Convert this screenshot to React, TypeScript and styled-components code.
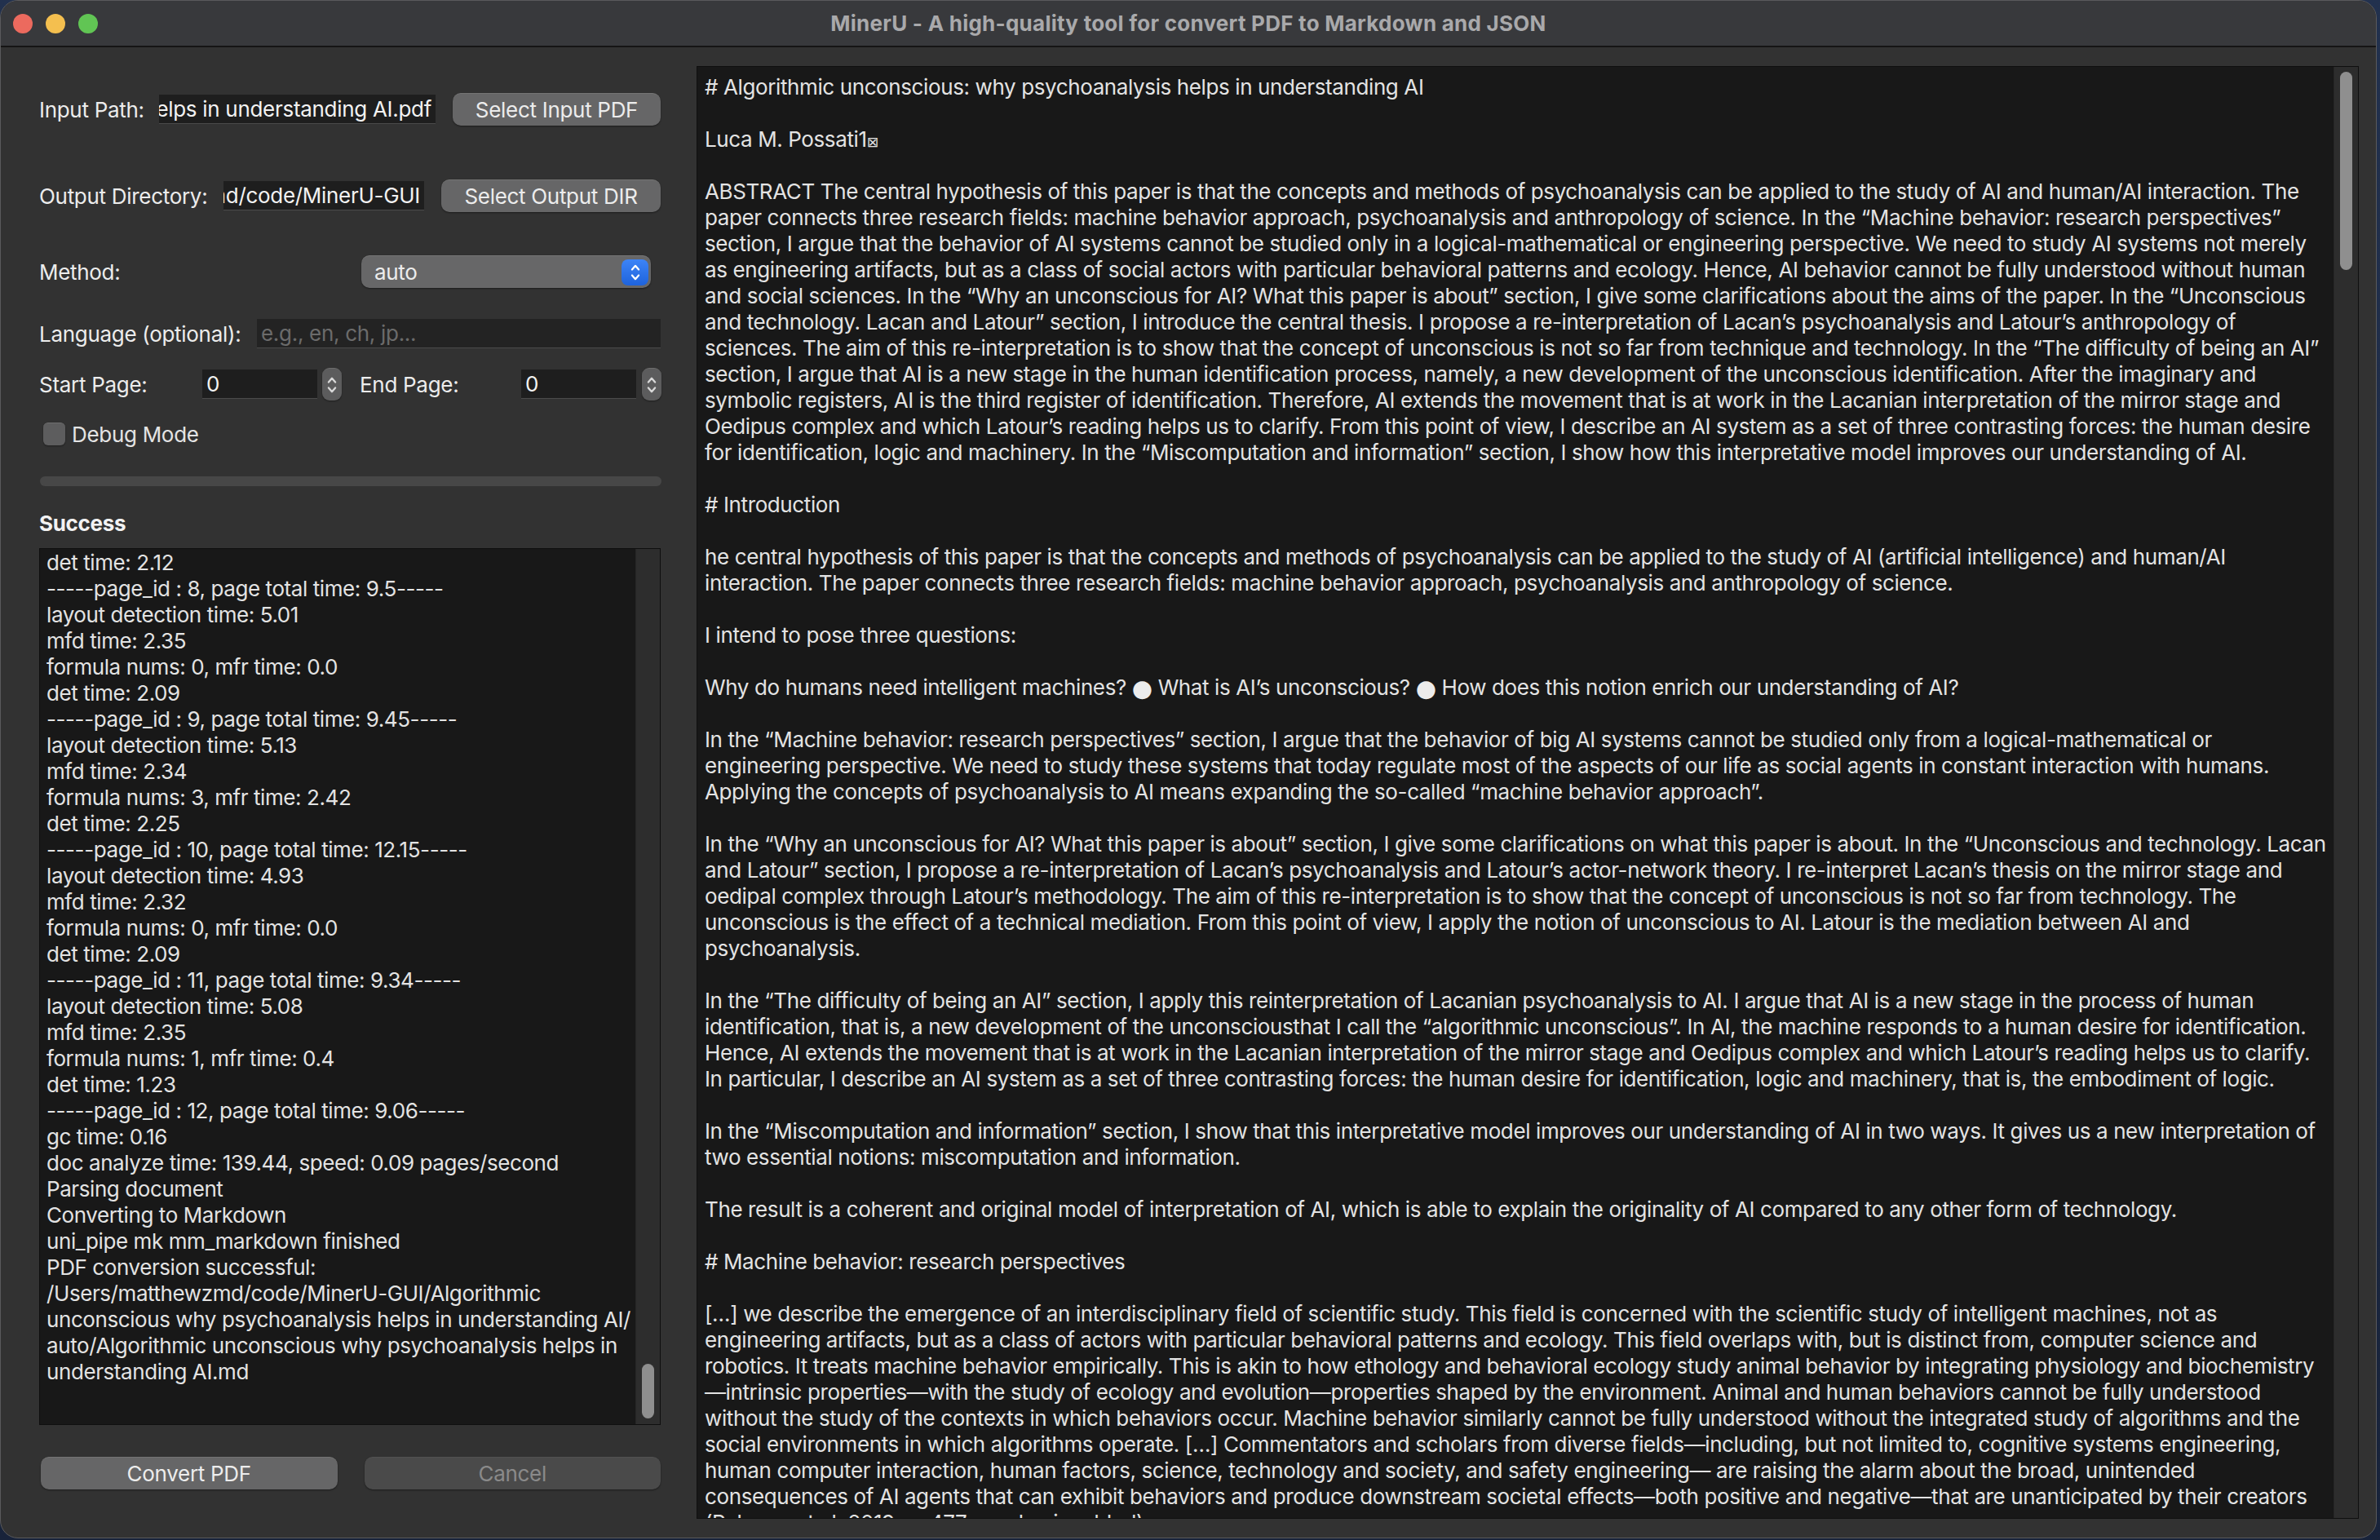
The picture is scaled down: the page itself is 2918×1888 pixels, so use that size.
import React from 'react';
import styled, { createGlobalStyle } from 'styled-components';

const GlobalStyle = createGlobalStyle`
  html, body { margin: 0; padding: 0; background: #1c2940; }
  body { overflow: hidden; font-family: Inter, "Noto Sans", "Liberation Sans", sans-serif; }
  #root { width: 2918px; height: 1888px; }
`;

const Desktop = styled.div`
  width: 2918px;
  height: 1888px;
  background: linear-gradient(180deg, #22314e 0%, #18233a 100%);
`;

const Window = styled.div`
  width: 2914px;
  height: 1886px;
  box-sizing: border-box;
  border: 1px solid #5a5a5c;
  border-radius: 22px;
  overflow: hidden;
  background: #323232;
  display: flex;
  flex-direction: column;
  color: #e6e6e6;
  font-size: 26px;
  letter-spacing: -0.3px;
`;

const TitleBar = styled.div`
  height: 55px;
  flex: none;
  background: #38393c;
  border-bottom: 2px solid #151515;
  display: grid;
  grid-template-columns: 1fr auto 1fr;
  align-items: center;
`;

const Lights = styled.div`
  display: flex;
  gap: 16px;
  padding-left: 15px;
`;

const Light = styled.span<{ $c: string }>`
  width: 24px;
  height: 24px;
  border-radius: 50%;
  background: ${(p) => p.$c};
`;

const Title = styled.div`
  font-weight: 700;
  color: #a9a9ab;
  font-size: 26px;
  letter-spacing: 0.25px;
`;

const Body = styled.div`
  flex: 1;
  display: flex;
  gap: 44px;
  padding: 0 21px 23px 47px;
  min-height: 0;
`;

const Left = styled.div`
  width: 762px;
  flex: none;
  display: flex;
  flex-direction: column;
`;

const Row = styled.div<{ $mt: number; $h: number }>`
  margin-top: ${(p) => p.$mt}px;
  height: ${(p) => p.$h}px;
  display: flex;
  align-items: center;
  flex: none;
`;

const Label = styled.div<{ $w?: number; $ml?: number }>`
  ${(p) => (p.$w ? `width: ${p.$w}px; flex: none;` : 'flex: 1;')}
  margin-left: ${(p) => p.$ml ?? 0}px;
  color: #ececec;
  white-space: nowrap;
`;

const Field = styled.div<{ $w?: number; $placeholder?: boolean }>`
  ${(p) => (p.$w ? `width: ${p.$w}px; flex: none;` : 'flex: 1;')}
  height: 36px;
  box-sizing: border-box;
  background: ${(p) => (p.$placeholder ? '#232323' : '#1e1e1e')};
  border-bottom: 1px solid #4b4b4b;
  display: flex;
  align-items: center;
  overflow: hidden;
  white-space: nowrap;
  padding: 0 5px;
  color: ${(p) => (p.$placeholder ? '#6b6b6b' : '#f2f2f2')};
`;

const PathField = styled(Field)`
  justify-content: flex-end;
`;

const Button = styled.div<{ $w?: number; $disabled?: boolean; $ml?: number }>`
  ${(p) => (p.$w ? `width: ${p.$w}px; flex: none;` : 'flex: 1;')}
  margin-left: ${(p) => p.$ml ?? 0}px;
  height: 40px;
  box-sizing: border-box;
  border-radius: 10px;
  background: ${(p) => (p.$disabled ? '#4a4a4a' : '#666667')};
  border-top: 1px solid ${(p) => (p.$disabled ? '#525252' : '#747474')};
  box-shadow: 0 1px 2px rgba(0, 0, 0, 0.45);
  color: ${(p) => (p.$disabled ? '#8a8a8a' : '#ececec')};
  display: flex;
  align-items: center;
  justify-content: center;
  white-space: nowrap;
`;

const Select = styled.div`
  width: 355px;
  height: 40px;
  margin-right: 12px;
  box-sizing: border-box;
  border-radius: 10px;
  background: #676768;
  border-top: 1px solid #767676;
  box-shadow: 0 1px 2px rgba(0, 0, 0, 0.45);
  display: flex;
  align-items: center;
  padding: 0 3px 0 16px;
  color: #ececec;
`;

const SelectText = styled.span`
  flex: 1;
`;

const BlueArrows = styled.div`
  width: 33px;
  height: 32px;
  border-radius: 8px;
  background: linear-gradient(180deg, #3d84f7 0%, #1e63dc 100%);
  display: flex;
  align-items: center;
  justify-content: center;
`;

const Stepper = styled.div<{ $ml: number }>`
  width: 24px;
  height: 40px;
  margin-left: ${(p) => p.$ml}px;
  flex: none;
  box-sizing: border-box;
  border-radius: 9px;
  background: #5c5c5d;
  border-top: 1px solid #6c6c6c;
  box-shadow: 0 1px 2px rgba(0, 0, 0, 0.4);
  display: flex;
  align-items: center;
  justify-content: center;
`;

const Checkbox = styled.div`
  width: 27px;
  height: 28px;
  margin-left: 5px;
  border-radius: 6px;
  background: #5d5d5e;
  border-top: 1px solid #6e6e6e;
  box-sizing: border-box;
  box-shadow: 0 1px 2px rgba(0, 0, 0, 0.4);
`;

const CheckLabel = styled.span`
  margin-left: 8px;
  color: #e4e4e4;
`;

const Progress = styled.div`
  margin-top: 38px;
  height: 12px;
  flex: none;
  border-radius: 6px;
  background: #474747;
  margin-left: 1px;
  margin-right: -1px;
`;

const Heading = styled.div`
  margin-top: 32px;
  height: 28px;
  line-height: 28px;
  font-weight: 700;
  color: #f2f2f2;
`;

const Scroller = styled.div<{ $mt?: number; $h?: number }>`
  ${(p) => (p.$mt !== undefined ? `margin-top: ${p.$mt}px;` : '')}
  ${(p) => (p.$h !== undefined ? `height: ${p.$h}px; flex: none;` : 'flex: 1;')}
  box-sizing: border-box;
  background: #181818;
  border: 1px solid #0f0f0f;
  display: flex;
  overflow: hidden;
`;

const TextArea = styled.div<{ $pt: number; $pl: number; $ls: number }>`
  flex: 1;
  overflow: hidden;
  padding: ${(p) => p.$pt}px 0 0 ${(p) => p.$pl}px;
  line-height: 32px;
  letter-spacing: ${(p) => p.$ls}px;
  color: #e3e3e3;
`;

const Line = styled.div`
  white-space: nowrap;
  height: 32px;
`;

const Track = styled.div<{ $end?: boolean }>`
  width: 30px;
  flex: none;
  background: #2d2d2d;
  border-left: 1px solid #262626;
  display: flex;
  flex-direction: column;
  align-items: center;
  justify-content: ${(p) => (p.$end ? 'flex-end' : 'flex-start')};
  padding: 6px 0 7px;
  box-sizing: border-box;
`;

const Thumb = styled.div<{ $h: number }>`
  width: 15px;
  height: ${(p) => p.$h}px;
  border-radius: 8px;
  background: #8f8f8f;
`;

const Mail = styled.span`
  font-size: 17px;
  font-family: "DejaVu Sans", sans-serif;
`;

const Bullet = styled.span`
  font-family: "DejaVu Sans", sans-serif;
  font-size: 29px;
  line-height: 0;
  vertical-align: -2px;
  color: #ececec;
`;

const ButtonRow = styled.div`
  margin-top: 39px;
  height: 40px;
  flex: none;
  display: flex;
  gap: 33px;
  padding-left: 2px;
`;

const Right = styled.div`
  flex: 1;
  display: flex;
  flex-direction: column;
  padding-top: 23px;
  min-width: 0;
`;

const Chevrons = ({ color, w, h, sw }: { color: string; w: number; h: number; sw: number }) => (
  <svg width={w} height={h} viewBox="0 0 12 20" fill="none" stroke={color} strokeWidth={sw} strokeLinecap="round" strokeLinejoin="round">
    <path d="M2.5 7 L6 3 L9.5 7" />
    <path d="M2.5 13 L6 17 L9.5 13" />
  </svg>
);

const logLines = [
  'det time: 2.12',
  '-----page_id : 8, page total time: 9.5-----',
  'layout detection time: 5.01',
  'mfd time: 2.35',
  'formula nums: 0, mfr time: 0.0',
  'det time: 2.09',
  '-----page_id : 9, page total time: 9.45-----',
  'layout detection time: 5.13',
  'mfd time: 2.34',
  'formula nums: 3, mfr time: 2.42',
  'det time: 2.25',
  '-----page_id : 10, page total time: 12.15-----',
  'layout detection time: 4.93',
  'mfd time: 2.32',
  'formula nums: 0, mfr time: 0.0',
  'det time: 2.09',
  '-----page_id : 11, page total time: 9.34-----',
  'layout detection time: 5.08',
  'mfd time: 2.35',
  'formula nums: 1, mfr time: 0.4',
  'det time: 1.23',
  '-----page_id : 12, page total time: 9.06-----',
  'gc time: 0.16',
  'doc analyze time: 139.44, speed: 0.09 pages/second',
  'Parsing document',
  'Converting to Markdown',
  'uni_pipe mk mm_markdown finished',
  'PDF conversion successful:',
  '/Users/matthewzmd/code/MinerU-GUI/Algorithmic',
  'unconscious why psychoanalysis helps in understanding AI/',
  'auto/Algorithmic unconscious why psychoanalysis helps in',
  'understanding AI.md',
];

const B = '●';

const docLines: React.ReactNode[] = [
  '# Algorithmic unconscious: why psychoanalysis helps in understanding AI',
  '',
  <>Luca M. Possati1<Mail>⊠</Mail></>,
  '',
  'ABSTRACT The central hypothesis of this paper is that the concepts and methods of psychoanalysis can be applied to the study of AI and human/AI interaction. The',
  'paper connects three research fields: machine behavior approach, psychoanalysis and anthropology of science. In the “Machine behavior: research perspectives”',
  'section, I argue that the behavior of AI systems cannot be studied only in a logical-mathematical or engineering perspective. We need to study AI systems not merely',
  'as engineering artifacts, but as a class of social actors with particular behavioral patterns and ecology. Hence, AI behavior cannot be fully understood without human',
  'and social sciences. In the “Why an unconscious for AI? What this paper is about” section, I give some clarifications about the aims of the paper. In the “Unconscious',
  'and technology. Lacan and Latour” section, I introduce the central thesis. I propose a re-interpretation of Lacan’s psychoanalysis and Latour’s anthropology of',
  'sciences. The aim of this re-interpretation is to show that the concept of unconscious is not so far from technique and technology. In the “The difficulty of being an AI”',
  'section, I argue that AI is a new stage in the human identification process, namely, a new development of the unconscious identification. After the imaginary and',
  'symbolic registers, AI is the third register of identification. Therefore, AI extends the movement that is at work in the Lacanian interpretation of the mirror stage and',
  'Oedipus complex and which Latour’s reading helps us to clarify. From this point of view, I describe an AI system as a set of three contrasting forces: the human desire',
  'for identification, logic and machinery. In the “Miscomputation and information” section, I show how this interpretative model improves our understanding of AI.',
  '',
  '# Introduction',
  '',
  'he central hypothesis of this paper is that the concepts and methods of psychoanalysis can be applied to the study of AI (artificial intelligence) and human/AI',
  'interaction. The paper connects three research fields: machine behavior approach, psychoanalysis and anthropology of science.',
  '',
  'I intend to pose three questions:',
  '',
  <>Why do humans need intelligent machines? <Bullet>{B}</Bullet> What is AI’s unconscious? <Bullet>{B}</Bullet> How does this notion enrich our understanding of AI?</>,
  '',
  'In the “Machine behavior: research perspectives” section, I argue that the behavior of big AI systems cannot be studied only from a logical-mathematical or',
  'engineering perspective. We need to study these systems that today regulate most of the aspects of our life as social agents in constant interaction with humans.',
  'Applying the concepts of psychoanalysis to AI means expanding the so-called “machine behavior approach”.',
  '',
  'In the “Why an unconscious for AI? What this paper is about” section, I give some clarifications on what this paper is about. In the “Unconscious and technology. Lacan',
  'and Latour” section, I propose a re-interpretation of Lacan’s psychoanalysis and Latour’s actor-network theory. I re-interpret Lacan’s thesis on the mirror stage and',
  'oedipal complex through Latour’s methodology. The aim of this re-interpretation is to show that the concept of unconscious is not so far from technology. The',
  'unconscious is the effect of a technical mediation. From this point of view, I apply the notion of unconscious to AI. Latour is the mediation between AI and',
  'psychoanalysis.',
  '',
  'In the “The difficulty of being an AI” section, I apply this reinterpretation of Lacanian psychoanalysis to AI. I argue that AI is a new stage in the process of human',
  'identification, that is, a new development of the unconsciousthat I call the “algorithmic unconscious”. In AI, the machine responds to a human desire for identification.',
  'Hence, AI extends the movement that is at work in the Lacanian interpretation of the mirror stage and Oedipus complex and which Latour’s reading helps us to clarify.',
  'In particular, I describe an AI system as a set of three contrasting forces: the human desire for identification, logic and machinery, that is, the embodiment of logic.',
  '',
  'In the “Miscomputation and information” section, I show that this interpretative model improves our understanding of AI in two ways. It gives us a new interpretation of',
  'two essential notions: miscomputation and information.',
  '',
  'The result is a coherent and original model of interpretation of AI, which is able to explain the originality of AI compared to any other form of technology.',
  '',
  '# Machine behavior: research perspectives',
  '',
  '[…] we describe the emergence of an interdisciplinary field of scientific study. This field is concerned with the scientific study of intelligent machines, not as',
  'engineering artifacts, but as a class of actors with particular behavioral patterns and ecology. This field overlaps with, but is distinct from, computer science and',
  'robotics. It treats machine behavior empirically. This is akin to how ethology and behavioral ecology study animal behavior by integrating physiology and biochemistry',
  '—intrinsic properties—with the study of ecology and evolution—properties shaped by the environment. Animal and human behaviors cannot be fully understood',
  'without the study of the contexts in which behaviors occur. Machine behavior similarly cannot be fully understood without the integrated study of algorithms and the',
  'social environments in which algorithms operate. […] Commentators and scholars from diverse fields—including, but not limited to, cognitive systems engineering,',
  'human computer interaction, human factors, science, technology and society, and safety engineering— are raising the alarm about the broad, unintended',
  'consequences of AI agents that can exhibit behaviors and produce downstream societal effects—both positive and negative—that are unanticipated by their creators',
  '(Rahwan et al. 2019, p. 477, emphasis added).',
];

export default function App() {
  return (
    <>
      <GlobalStyle />
      <Desktop>
        <Window>
          <TitleBar>
            <Lights>
              <Light $c="#ec6a5e" />
              <Light $c="#f4bf4f" />
              <Light $c="#61c554" />
            </Lights>
            <Title>MinerU - A high-quality tool for convert PDF to Markdown and JSON</Title>
            <div />
          </TitleBar>
          <Body>
            <Left>
              <Row $mt={56} $h={40}>
                <Label $w={147}>Input Path:</Label>
                <PathField $w={339}>/Users/matthewzmd/code/MinerU-GUI/Algorithmic unconscious why psychoanalysis helps in understanding AI.pdf</PathField>
                <Button $w={255} $ml={21}>Select Input PDF</Button>
              </Row>
              <Row $mt={66} $h={40}>
                <Label $w={226}>Output Directory:</Label>
                <PathField $w={246}>/Users/matthewzmd/code/MinerU-GUI</PathField>
                <Button $w={269} $ml={21}>Select Output DIR</Button>
              </Row>
              <Row $mt={53} $h={40}>
                <Label>Method:</Label>
                <Select>
                  <SelectText>auto</SelectText>
                  <BlueArrows>
                    <Chevrons color="#ffffff" w={14} h={26} sw={1.9} />
                  </BlueArrows>
                </Select>
              </Row>
              <Row $mt={36} $h={40}>
                <Label $w={267}>Language (optional):</Label>
                <Field $placeholder>e.g., en, ch, jp...</Field>
              </Row>
              <Row $mt={22} $h={40}>
                <Label $w={200}>Start Page:</Label>
                <Field $w={141}>0</Field>
                <Stepper $ml={6}>
                  <Chevrons color="#d8d8d8" w={14} h={32} sw={2} />
                </Stepper>
                <Label $w={198} $ml={22}>End Page:</Label>
                <Field $w={141}>0</Field>
                <Stepper $ml={7}>
                  <Chevrons color="#d8d8d8" w={14} h={32} sw={2} />
                </Stepper>
              </Row>
              <Row $mt={27} $h={28}>
                <Checkbox />
                <CheckLabel>Debug Mode</CheckLabel>
              </Row>
              <Progress />
              <Heading>Success</Heading>
              <Scroller $mt={16} $h={1075}>
                <TextArea $pt={1} $pl={8} $ls={-0.42}>
                  {logLines.map((l, i) => (
                    <Line key={i}>{l}</Line>
                  ))}
                </TextArea>
                <Track $end>
                  <Thumb $h={67} />
                </Track>
              </Scroller>
              <ButtonRow>
                <Button>Convert PDF</Button>
                <Button $disabled>Cancel</Button>
              </ButtonRow>
            </Left>
            <Right>
              <Scroller>
                <TextArea $pt={9} $pl={9} $ls={-0.39}>
                  {docLines.map((l, i) => (
                    <Line key={i}>{l}</Line>
                  ))}
                </TextArea>
                <Track>
                  <Thumb $h={243} />
                </Track>
              </Scroller>
            </Right>
          </Body>
        </Window>
      </Desktop>
    </>
  );
}
